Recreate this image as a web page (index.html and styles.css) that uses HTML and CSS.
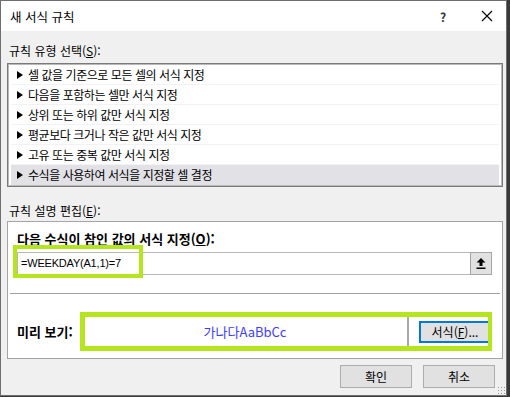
FILE: index.html
```html
<!DOCTYPE html>
<html lang="ko">
<head>
<meta charset="UTF-8">
<title>새 서식 규칙</title>
<link rel="stylesheet" href="styles.css">
</head>
<body>
<div class="dialog">
	<div class="titlebar">
		<span class="title">새 서식 규칙</span>
		<span class="tb-help">?</span>
		<span class="tb-close">
			<svg width="12" height="12" viewBox="0 0 12 12"><path d="M1 1L11 11M11 1L1 11" stroke="#000" stroke-width="1.1" fill="none"/></svg>
		</span>
	</div>
	<div class="content">
		<div class="label label-type">규칙 유형 선택(<u>S</u>):</div>
		<ul class="rule-list">
			<li class="rule-item"><span class="arrow"></span>셀 값을 기준으로 모든 셀의 서식 지정</li>
			<li class="rule-item"><span class="arrow"></span>다음을 포함하는 셀만 서식 지정</li>
			<li class="rule-item"><span class="arrow"></span>상위 또는 하위 값만 서식 지정</li>
			<li class="rule-item"><span class="arrow"></span>평균보다 크거나 작은 값만 서식 지정</li>
			<li class="rule-item"><span class="arrow"></span>고유 또는 중복 값만 서식 지정</li>
			<li class="rule-item selected"><span class="arrow"></span>수식을 사용하여 서식을 지정할 셀 결정</li>
		</ul>
		<div class="label label-edit">규칙 설명 편집(<u>E</u>):</div>
		<div class="panel">
			<div class="panel-top">
				<div class="bold-label">다음 수식이 참인 값의 서식 지정(<u>O</u>):</div>
				<div class="formula-row">
					<div class="formula-input">=WEEKDAY(A1,1)=7</div>
					<div class="collapse-btn">
						<svg width="10" height="11" viewBox="0 0 10 11"><path d="M5 0L9.5 4.5H6.5V8H3.5V4.5H0.5Z" fill="#000"/><rect x="0.5" y="9.5" width="9" height="1.5" fill="#000"/></svg>
					</div>
				</div>
			</div>
			<div class="panel-sep"></div>
			<div class="panel-bottom">
				<div class="bold-label preview-label">미리 보기:</div>
				<div class="preview">
					<div class="preview-text">가나다AaBbCc</div>
					<div class="preview-btn-cell"><button class="btn btn-focus">서식(<u>F</u>)...</button></div>
				</div>
			</div>
		</div>
		<div class="actions">
			<button class="btn">확인</button>
			<button class="btn">취소</button>
		</div>
	</div>
	<!-- 강조 표시 -->
	<div class="mark mark-formula"></div>
	<div class="mark mark-preview"></div>
	<div class="grip"></div>
</div>
</body>
</html>
```

FILE: styles.css
```css
html,body,div,span,ul,li { margin:0; padding:0; }
body { background:#3a3a3a; width:510px; height:397px; overflow:hidden; font-family:"Noto Sans CJK KR","Noto Sans",sans-serif; font-size:12px; color:#000; }

.dialog { position:relative; width:505px; height:394px; background:#f0f0f0; border:1px solid #6f6f6f; }

.titlebar { height:30px; background:#fff; display:flex; align-items:center; padding-left:9px; }
.title { flex:1; font-size:12.5px; }
.tb-help { width:28px; font-size:12px; font-weight:bold; color:#333; }
.tb-close { width:38px; display:flex; justify-content:center; }

.content { padding:0 3px 0 6px; }

.label { height:18px; line-height:18px; padding-left:2px; }
.label-type { margin-top:11px; }
.label-edit { margin-top:15px; }

.rule-list { list-style:none; margin-top:3px; background:#fff; border:1px solid #7a7a7a; box-shadow:inset 0 0 0 1px #b9b9b9; padding:1px 3px 1px 3px; }
.rule-item { height:19px; line-height:19px; border-bottom:1px solid #f2f2f2; display:flex; align-items:center; padding-left:6px; letter-spacing:-0.45px; }
.rule-item.selected { background:#e1e1e6; border-bottom-color:#e1e1e6; }
.arrow { width:0; height:0; border-left:6px solid #000; border-top:4px solid transparent; border-bottom:4px solid transparent; margin-right:5px; }

.panel { margin-top:1px; background:#fff; border:1px solid #a5a5a5; height:136px; }
.panel-top { padding:8px 10px 0 9px; height:63px; }
.bold-label { font-weight:bold; font-size:13px; height:18px; line-height:18px; }
.formula-row { display:flex; margin-top:4px; height:23px; }
.formula-input { flex:1; border:1px solid #b8b8b8; border-right:none; line-height:21px; padding-left:3px; font-family:"Liberation Sans","Noto Sans CJK KR",sans-serif; font-size:11px; letter-spacing:-0.2px; }
.collapse-btn { width:20px; background:#e1e1e1; border:1px solid #a6a6a6; display:flex; align-items:center; justify-content:center; }

.panel-sep { height:1px; background:#a0a0a0; margin:0 2px; }

.panel-bottom { display:flex; align-items:center; padding:20px 10px 0 9px; }
.preview-label { width:65px; }
.preview { flex:1; height:33px; display:flex; border:1px solid #a0a0a0; }
.preview-text { flex:1; text-align:center; line-height:33px; color:#3d3dff; font-size:13px; }
.preview-btn-cell { width:82px; border-left:2px solid #a9a9a9; display:flex; align-items:center; justify-content:flex-end; }

.btn { font-family:"Noto Sans CJK KR","Noto Sans",sans-serif; font-size:12px; width:72px; height:23px; background:#e1e1e1; border:1px solid #adadad; padding:0; color:#000; }
.btn-focus { height:22px; border:2px solid #0078d7; }

.actions { display:flex; justify-content:flex-end; gap:11px; margin-top:6px; padding-right:8px; }

.mark { position:absolute; border:4px solid #b5e61d; }
.mark-formula { left:12px; top:244px; width:122px; height:25px; }
.mark-preview { left:79px; top:311px; width:403px; height:29px; border-width:5px 4px 5px 5px; }

.grip { position:absolute; right:1px; bottom:1px; width:8px; height:8px; background:radial-gradient(circle,#9a9a9a 0.8px,transparent 1px) 0 0/3px 3px; }
```
